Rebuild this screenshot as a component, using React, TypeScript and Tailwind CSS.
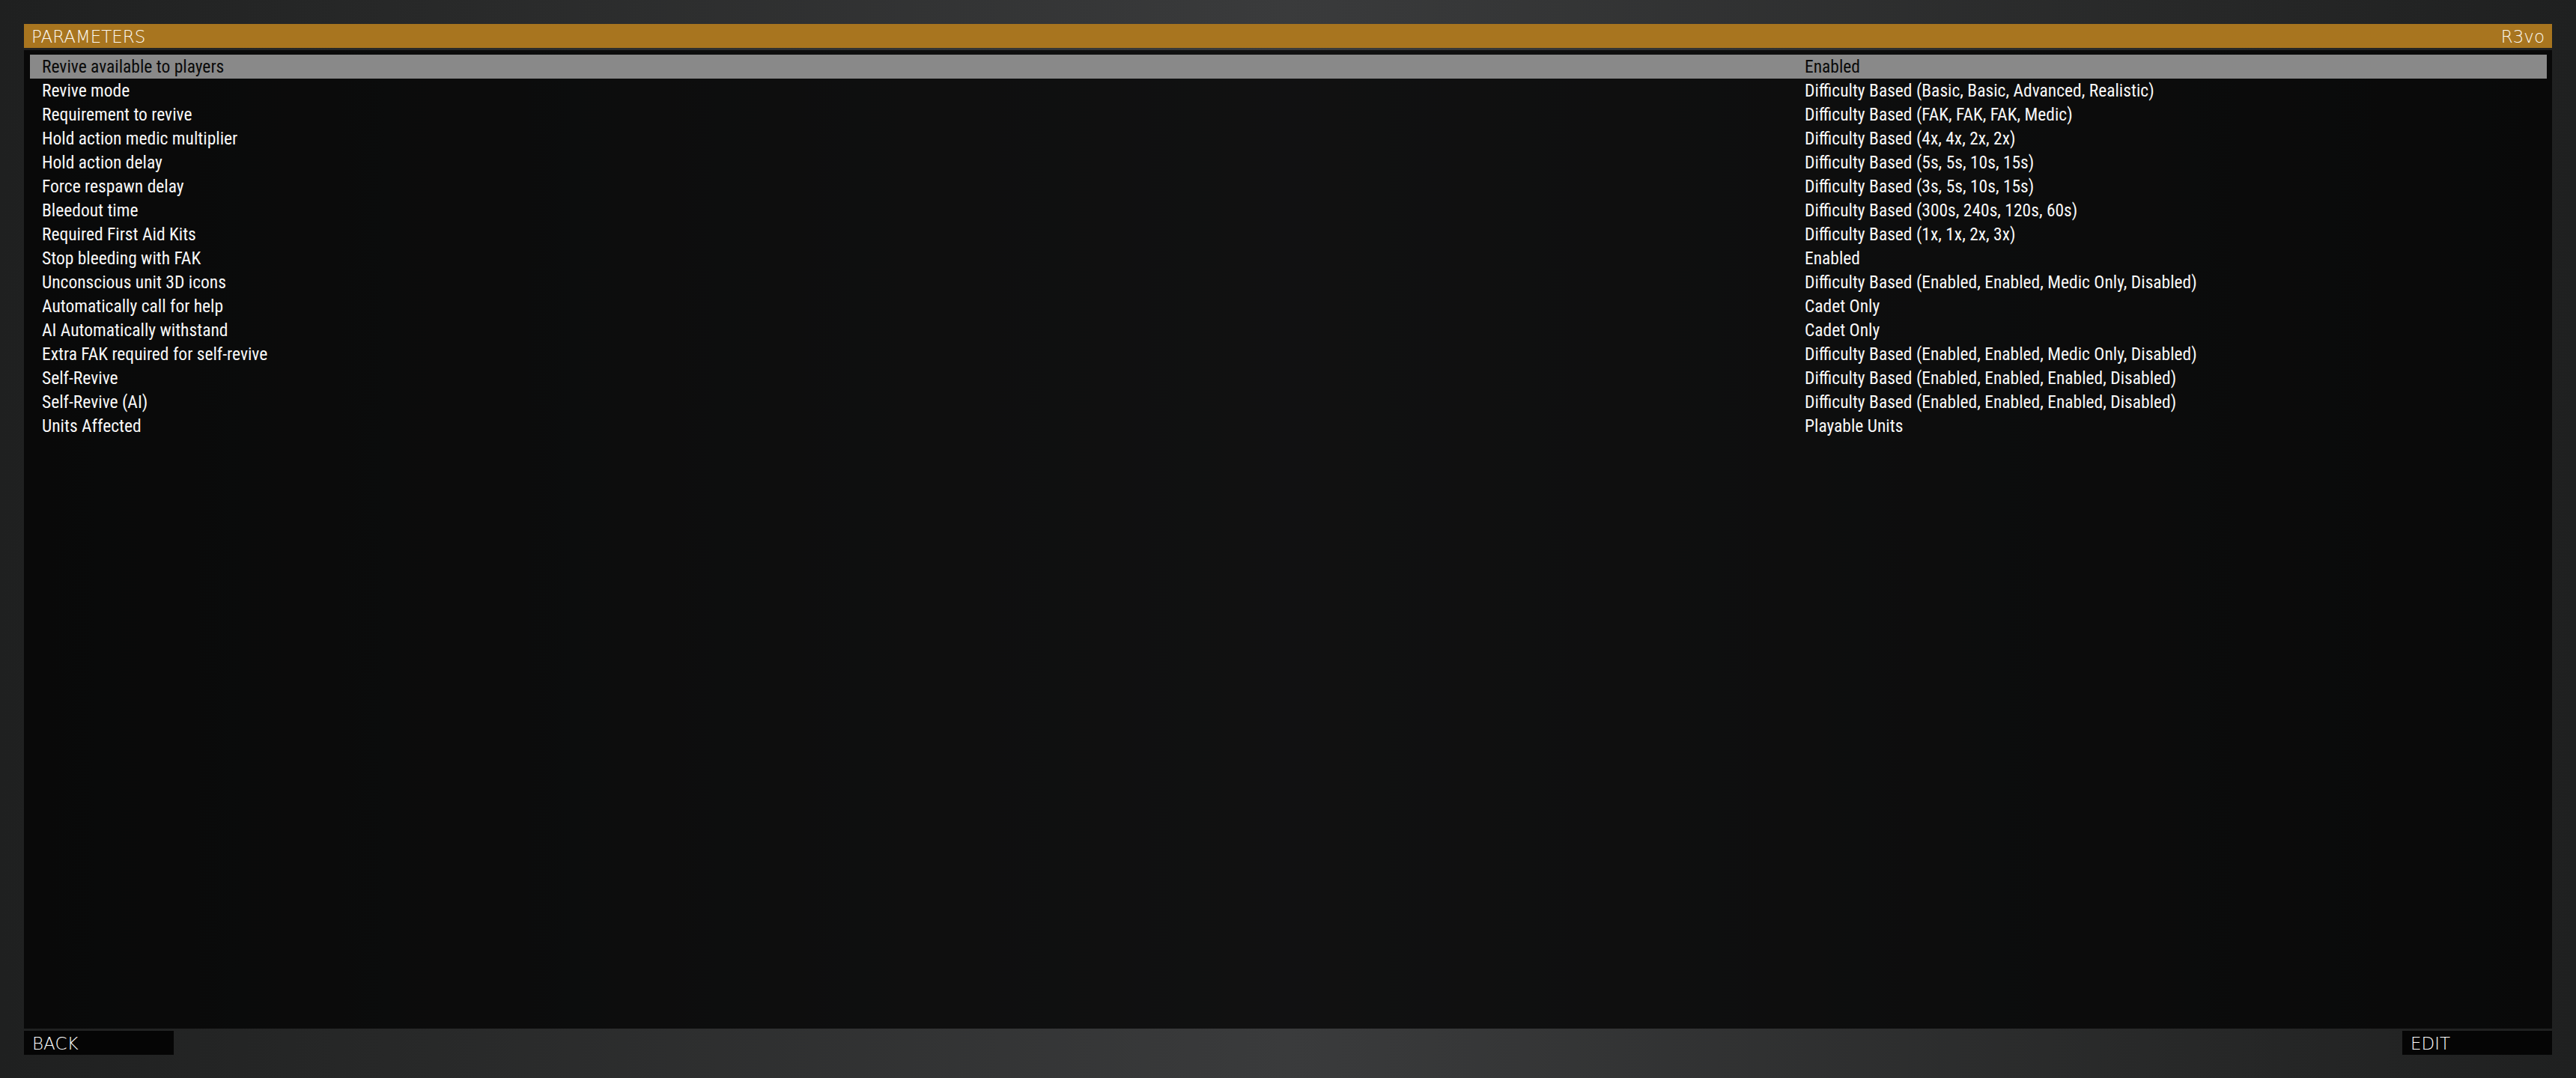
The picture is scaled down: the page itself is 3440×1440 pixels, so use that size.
import React from "react";

const rows: [string, string][] = [
  ["Revive available to players", "Enabled"],
  ["Revive mode", "Difficulty Based (Basic, Basic, Advanced, Realistic)"],
  ["Requirement to revive", "Difficulty Based (FAK, FAK, FAK, Medic)"],
  ["Hold action medic multiplier", "Difficulty Based (4x, 4x, 2x, 2x)"],
  ["Hold action delay", "Difficulty Based (5s, 5s, 10s, 15s)"],
  ["Force respawn delay", "Difficulty Based (3s, 5s, 10s, 15s)"],
  ["Bleedout time", "Difficulty Based (300s, 240s, 120s, 60s)"],
  ["Required First Aid Kits", "Difficulty Based (1x, 1x, 2x, 3x)"],
  ["Stop bleeding with FAK", "Enabled"],
  ["Unconscious unit 3D icons", "Difficulty Based (Enabled, Enabled, Medic Only, Disabled)"],
  ["Automatically call for help", "Cadet Only"],
  ["AI Automatically withstand", "Cadet Only"],
  ["Extra FAK required for self-revive", "Difficulty Based (Enabled, Enabled, Medic Only, Disabled)"],
  ["Self-Revive", "Difficulty Based (Enabled, Enabled, Enabled, Disabled)"],
  ["Self-Revive (AI)", "Difficulty Based (Enabled, Enabled, Enabled, Disabled)"],
  ["Units Affected", "Playable Units"],
];

const rowFont = { fontFamily: "'Roboto Condensed','Liberation Sans Narrow','Roboto',sans-serif" };
const titleFont = { fontFamily: "'DejaVu Sans','Lato',sans-serif" };

export default function App() {
  return (
    <div className="w-full h-[1440px] bg-[linear-gradient(to_right,#1f2020_0%,#272828_15%,#3a3b3c_50%,#272828_85%,#1f2020_100%)] px-8 pt-8 pb-[31px] flex flex-col overflow-hidden">
      <div
        className="h-8 shrink-0 bg-[#a8751f] flex items-center justify-between pl-[10px] pr-[10px] pt-[2px] text-[23px] font-light leading-none text-[#fbf8f0]"
        style={titleFont}
      >
        <span>PARAMETERS</span>
        <span>R3vo</span>
      </div>
      <div className="mt-[3px] flex-1 min-h-0 bg-black/70 pt-[6px] pl-2 pr-[7px]">
        {rows.map(([label, value], i) => (
          <div
            key={i}
            className={
              i === 0
                ? "h-8 grid grid-cols-[2354px_1fr] items-center pl-4 pt-[1px] bg-[#898989] text-[#0a0a0a] text-[23.5px] leading-none"
                : "h-8 grid grid-cols-[2354px_1fr] items-center pl-4 pt-[1px] text-[#f8f8f8] text-[23.5px] leading-none"
            }
            style={rowFont}
          >
            <span className="whitespace-nowrap">{label}</span>
            <span className="whitespace-nowrap">{value}</span>
          </div>
        ))}
      </div>
      <div className="mt-[3px] h-8 shrink-0 flex justify-between">
        <div
          className="w-[200px] h-8 bg-[#050505] flex items-center pl-[11px] pt-[2px] text-[23px] font-light leading-none text-white"
          style={titleFont}
        >
          BACK
        </div>
        <div
          className="w-[200px] h-8 bg-[#050505] flex items-center pl-[11px] pt-[2px] text-[23px] font-light leading-none text-white"
          style={titleFont}
        >
          EDIT
        </div>
      </div>
    </div>
  );
}
